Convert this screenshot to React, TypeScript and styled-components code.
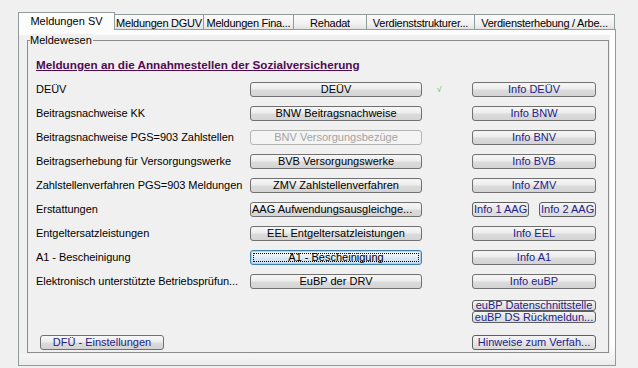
import React from 'react';
import styled, { createGlobalStyle, css } from 'styled-components';

const Global = createGlobalStyle`
  html, body { margin: 0; padding: 0; background: #f0f0f0; }
  body { font-family: "Liberation Sans", Arial, sans-serif; font-size: 11px; color: #000; }
  * { box-sizing: border-box; }
`;

const Frame = styled.div`
  width: 638px;
  height: 368px;
  padding: 12px 0 0 18px;
  overflow: hidden;
`;

const TabStrip = styled.div`
  display: flex;
  align-items: flex-end;
  height: 17px;
  position: relative;
  z-index: 1;
`;

const Tab = styled.div<{ $active?: boolean; $w: number }>`
  width: ${p => p.$w}px;
  white-space: nowrap;
  overflow: hidden;
  text-align: center;
  letter-spacing: -0.25px;
  border-top: 1px solid #919b9c;
  border-right: 1px solid #919b9c;
  ${p =>
    p.$active
      ? css`
          height: 18px;
          margin-bottom: -1px;
          border-left: 1px solid #919b9c;
          background: #fcfcfc;
          line-height: 14px;
          padding-top: 1px;
          letter-spacing: 0;
        `
      : css`
          height: 15px;
          background: linear-gradient(#fbfbfb, #f2f2f2 60%, #e2e2e2);
          line-height: 15px;
          padding-top: 1px;
        `}
`;

const Panel = styled.div`
  width: 598px;
  height: 337px;
  border: 1px solid #919b9c;
  background: linear-gradient(#fdfdfd, #fdfdfd 94%, #ececec);
  padding: 5px 5px 0 0;
`;

const PanelBody = styled.div`
  background: #f0f0f0;
  padding: 5px 1px 1px 8px;
`;

const Group = styled.div`
  position: relative;
  width: 582px;
  border: 1px solid #8c8c8c;
  padding: 17px 0 2px 8px;
`;

const Legend = styled.span`
  position: absolute;
  left: 2px;
  top: -7px;
  line-height: 13px;
  background: #f0f0f0;
  padding-right: 1px;
`;

const Title = styled.div`
  font-weight: bold;
  text-decoration: underline;
  color: #520a52;
  line-height: 14px;
  font-size: 11.7px;
  margin-bottom: 10px;
`;

const Rows = styled.div`
  display: grid;
  grid-template-columns: 214px 172px 50px 124px;
  grid-auto-rows: 24px;
  align-items: start;
`;

const Label = styled.div`
  line-height: 15px;
  white-space: nowrap;
  letter-spacing: -0.05px;
`;

const buttonBase = css`
  display: block;
  font-family: "Liberation Sans", Arial, sans-serif;
  font-size: 11px;
  padding: 0;
  margin: 0;
  white-space: nowrap;
  overflow: visible;
  text-align: center;
  border-radius: 3px;
`;

const Btn = styled.button<{ $tone?: 'black' | 'navy'; $state?: 'normal' | 'disabled' | 'focus'; $w?: number; $align?: 'left' | 'center' }>`
  ${buttonBase};
  position: relative;
  width: ${p => (p.$w ? `${p.$w}px` : '100%')};
  height: 15px;
  line-height: 13px;
  text-align: ${p => p.$align ?? 'center'};
  padding-left: ${p => (p.$align === 'left' ? 1 : 0)}px;
  border: 1px solid #707070;
  background: linear-gradient(#f7f7f7, #ececec 48%, #dcdcdc 52%, #d3d3d3);
  color: ${p => (p.$tone === 'navy' ? '#22228a' : '#000')};
  ${p =>
    p.$state === 'disabled' &&
    css`
      border-color: #b4b4b4;
      background: #f4f4f4;
      color: #a3a3a3;
    `}
  ${p =>
    p.$state === 'focus' &&
    css`
      border-color: #3c7fb1;
      background: linear-gradient(#f4f9fd, #e6f0f8 48%, #d6e6f3 52%, #cfe1f0);
      box-shadow: inset 0 0 0 1px #a8d4f0;
      &::after {
        content: '';
        position: absolute;
        inset: 2px;
        border: 1px dotted #000;
      }
    `}
`;

const SmallBtn = styled.button<{ $w?: number; $h?: number }>`
  ${buttonBase};
  width: ${p => (p.$w ? `${p.$w}px` : '100%')};
  height: ${p => p.$h ?? 15}px;
  line-height: ${p => (p.$h ?? 15) - 2}px;
  border: 1px solid #5e5e5e;
  background: linear-gradient(#f5f5f5, #e6e6e6 50%, #dadada);
  color: #22228a;
  padding: 0 1px;
`;

const Check = styled.div`
  color: #4fae4f;
  font-size: 8px;
  line-height: 15px;
  padding-left: 15px;
`;

const Pair = styled.div`
  display: flex;
  gap: 10px;
`;

const Extra = styled.div`
  margin-top: 2px;
  margin-left: 436px;
  width: 124px;
  display: flex;
  flex-direction: column;
`;

const BottomRow = styled.div`
  display: flex;
  justify-content: space-between;
  margin-top: 12px;
  padding-left: 4px;
  width: 560px;
`;

type Row = { label: string; btn: string; info?: string; state?: 'normal' | 'disabled' | 'focus'; check?: boolean; pair?: boolean; left?: boolean };

const rows: Row[] = [
  { label: 'DEÜV', btn: 'DEÜV', info: 'Info DEÜV', check: true },
  { label: 'Beitragsnachweise KK', btn: 'BNW Beitragsnachweise', info: 'Info BNW' },
  { label: 'Beitragsnachweise PGS=903 Zahlstellen', btn: 'BNV Versorgungsbezüge', info: 'Info BNV', state: 'disabled' },
  { label: 'Beitragserhebung für Versorgungswerke', btn: 'BVB Versorgungswerke', info: 'Info BVB' },
  { label: 'Zahlstellenverfahren PGS=903 Meldungen', btn: 'ZMV Zahlstellenverfahren', info: 'Info ZMV' },
  { label: 'Erstattungen', btn: 'AAG Aufwendungsausgleichge...', pair: true, left: true },
  { label: 'Entgeltersatzleistungen', btn: 'EEL Entgeltersatzleistungen', info: 'Info EEL' },
  { label: 'A1 - Bescheinigung', btn: 'A1 - Bescheinigung', info: 'Info A1', state: 'focus' },
  { label: 'Elektronisch unterstützte Betriebsprüfun...', btn: 'EuBP der DRV', info: 'Info euBP' },
];

const tabs = [
  { t: 'Meldungen SV', w: 97, active: true },
  { t: 'Meldungen DGUV', w: 89 },
  { t: 'Meldungen Fina...', w: 90 },
  { t: 'Rehadat', w: 73 },
  { t: 'Verdienststrukturer...', w: 108 },
  { t: 'Verdiensterhebung / Arbe...', w: 140 },
];

export default function App() {
  return (
    <>
      <Global />
      <Frame>
        <TabStrip>
          {tabs.map(t => (
            <Tab key={t.t} $w={t.w} $active={t.active}>
              {t.t}
            </Tab>
          ))}
        </TabStrip>
        <Panel>
          <PanelBody>
            <Group>
              <Legend>Meldewesen</Legend>
              <Title>Meldungen an die Annahmestellen der Sozialversicherung</Title>
              <Rows>
                {rows.map(r => (
                  <React.Fragment key={r.label}>
                    <Label>{r.label}</Label>
                    <Btn $state={r.state} $align={r.left ? 'left' : 'center'}>
                      {r.btn}
                    </Btn>
                    <Check>{r.check ? '√' : ''}</Check>
                    {r.pair ? (
                      <Pair>
                        <SmallBtn $w={57}>Info 1 AAG</SmallBtn>
                        <SmallBtn $w={57}>Info 2 AAG</SmallBtn>
                      </Pair>
                    ) : (
                      <Btn $tone="navy">{r.info}</Btn>
                    )}
                  </React.Fragment>
                ))}
              </Rows>
              <Extra>
                <SmallBtn $h={11}>euBP Datenschnittstelle</SmallBtn>
                <SmallBtn $h={12}>euBP DS Rückmeldun...</SmallBtn>
              </Extra>
              <BottomRow>
                <Btn $tone="navy" $w={124}>DFÜ - Einstellungen</Btn>
                <SmallBtn $w={124}>Hinweise zum Verfah...</SmallBtn>
              </BottomRow>
            </Group>
          </PanelBody>
        </Panel>
      </Frame>
    </>
  );
}
